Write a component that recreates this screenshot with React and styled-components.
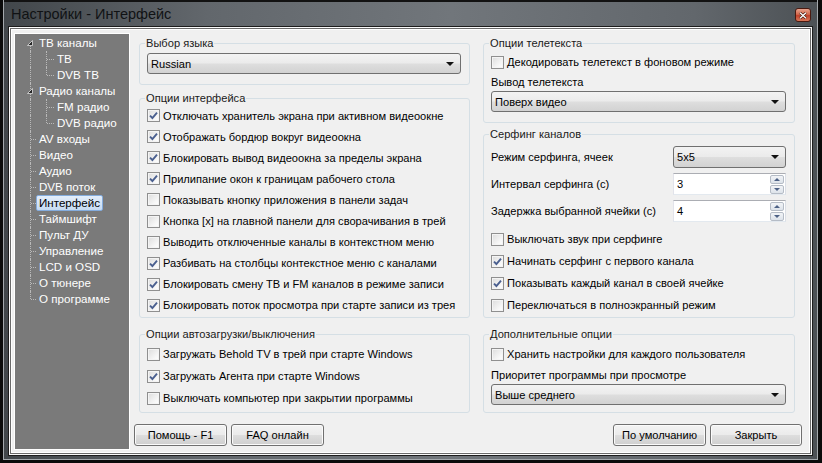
import React from 'react';
import styled, { createGlobalStyle } from 'styled-components';

const GlobalStyle = createGlobalStyle`
  html, body {
    margin: 0;
    padding: 0;
    background: #0b0b0b;
  }
  body {
    font-family: "Liberation Sans", Arial, sans-serif;
    font-size: 11.1px;
    color: #000;
  }
`;

const Window = styled.div`
  box-sizing: border-box;
  width: 815px;
  height: 460px;
  margin-left: 3px;
  display: flex;
  flex-direction: column;
  background: linear-gradient(90deg, #42474b 0%, #62676c 25%, #71767b 55%, #62676c 85%, #4c5155 100%);
  border: 1px solid #a4a9ad;
  border-top: 0;
`;

const TitleBar = styled.div`
  box-sizing: border-box;
  height: 27px;
  display: flex;
  justify-content: space-between;
  align-items: flex-start;
  padding: 0 6px 0 7px;
  border-top: 2px solid #121212;
`;

const Title = styled.div`
  font-family: "Liberation Sans", Arial, sans-serif;
  font-size: 14.5px;
  line-height: 25px;
  color: #101214;
`;

const CloseBtn = styled.div`
  box-sizing: border-box;
  width: 16px;
  height: 14px;
  margin-top: 6px;
  border: 1px solid #4a1a10;
  border-radius: 3px;
  background: linear-gradient(#e9a58f, #d2674b 45%, #c0412a 55%, #d9785a);
  display: flex;
  align-items: center;
  justify-content: center;
`;

const Client = styled.div`
  flex: 1;
  display: grid;
  grid-template-columns: 116px 1fr;
  column-gap: 4px;
  margin: 0 5px 4px 5px;
  padding: 5px 5px 4px 4px;
  border: 1px solid #fafafa;
  box-shadow: 0 0 0 1px #1c1c1c, inset 0 0 0 1px #6b6b6b, inset 0 0 0 2px #ffffff;
  background: #f0f0f0;
`;

const Tree = styled.div`
  box-sizing: border-box;
  background: #7a7a7a;
  border: 1px solid #ffffff;
  padding: 1px 0 0 7px;
  font-size: 11.6px;
`;

const TreeRow = styled.div`
  display: flex;
  align-items: center;
  height: 16px;
`;

const Guide = styled.div`
  position: relative;
  flex: none;
  width: ${p => p.$w}px;
  height: 16px;
  &::before {
    content: '';
    display: ${p => (p.$v ? 'block' : 'none')};
    position: absolute;
    left: ${p => p.$x}px;
    top: ${p => (p.$v === 'bottom' ? 11 : 0)}px;
    height: ${p => (p.$v === 'full' ? 16 : p.$v === 'top' ? 8 : 5)}px;
    border-left: 1px dotted #b9b9b9;
  }
  &::after {
    content: '';
    display: ${p => (p.$h ? 'block' : 'none')};
    position: absolute;
    left: ${p => p.$x + 1}px;
    top: 8px;
    width: ${p => p.$w - p.$x - 1}px;
    border-top: 1px dotted #b9b9b9;
  }
  svg {
    position: absolute;
    left: 5px;
    top: 5px;
  }
`;

const TreeLabel = styled.span`
  box-sizing: border-box;
  height: 16px;
  line-height: 14px;
  padding: 0 2px;
  white-space: nowrap;
  color: ${p => (p.$sel ? '#000' : '#fff')};
  border: 1px solid ${p => (p.$sel ? '#84acdd' : 'transparent')};
  border-radius: 2px;
  background: ${p => (p.$sel ? 'linear-gradient(#e4eefb, #c6dbf3)' : 'transparent')};
`;

const Main = styled.div`
  display: flex;
  flex-direction: column;
  padding: 3px 0 0 0;
`;

const Columns = styled.div`
  display: grid;
  grid-template-columns: 331px 312px;
  column-gap: 13px;
  padding-left: 5px;
`;

const Column = styled.div`
  display: flex;
  flex-direction: column;
  gap: ${p => p.$gap}px;
`;

const Group = styled.fieldset`
  box-sizing: border-box;
  height: ${p => p.$h}px;
  margin: ${p => p.$mt || 0}px 0 0 0;
  padding: ${p => p.$pt || 0}px 8px 0 7px;
  border: 1px solid #d5dfe5;
  border-radius: 3px;
  min-width: 0;
  display: flex;
  flex-direction: column;
`;

const Legend = styled.legend`
  padding: 0 1px;
  margin-left: -2px;
  line-height: 14px;
  font-size: 11.1px;
  color: #1a1a1a;
`;

const CheckRow = styled.div`
  display: flex;
  align-items: center;
  gap: 3px;
  height: ${p => p.$h || 21}px;
  flex: none;
  white-space: nowrap;
`;

const Box = styled.span`
  box-sizing: border-box;
  width: 13px;
  height: 13px;
  flex: none;
  border: 1px solid #8f8f8f;
  background: linear-gradient(135deg, #dcdcdc, #f7f7f7 70%, #ffffff);
  box-shadow: inset 0 0 0 1px #f4f4f4;
  display: flex;
  align-items: center;
  justify-content: center;
`;

const Caption = styled.div`
  height: ${p => p.$h}px;
  display: flex;
  align-items: center;
  flex: none;
`;

const Combo = styled.div`
  box-sizing: border-box;
  height: ${p => p.$h || 21}px;
  width: ${p => (p.$w ? `${p.$w}px` : 'auto')};
  flex: none;
  border: 1px solid #707070;
  border-radius: 3px;
  background: linear-gradient(#f3f3f3, #ebebeb 48%, #dedede 52%, #d2d2d2);
  display: flex;
  align-items: center;
  justify-content: space-between;
  padding: 0 6px 0 3px;
`;

const Arrow = styled.span`
  width: 0;
  height: 0;
  border-left: 4px solid transparent;
  border-right: 4px solid transparent;
  border-top: 4px solid #111;
`;

const FormRow = styled.div`
  display: flex;
  align-items: center;
  justify-content: space-between;
  height: 22px;
  flex: none;
  margin-top: ${p => p.$mt || 0}px;
`;

const Spin = styled.div`
  box-sizing: border-box;
  width: 113px;
  height: 22px;
  border: 1px solid #abadb3;
  border-bottom-color: #e3e9ef;
  border-left-color: #e2e3ea;
  border-right-color: #dbdfe6;
  background: #fff;
  display: flex;
  align-items: center;
  justify-content: space-between;
  padding: 0 1px 0 3px;
`;

const SpinButtons = styled.div`
  display: flex;
  flex-direction: column;
  gap: 1px;
`;

const SpinBtn = styled.span`
  box-sizing: border-box;
  width: 14px;
  height: 9px;
  border: 1px solid #b5bcc6;
  border-radius: 2px;
  background: linear-gradient(#f2f4f7, #dde3ea);
  display: flex;
  align-items: center;
  justify-content: center;
  &::before {
    content: '';
    width: 0;
    height: 0;
    border-left: 3px solid transparent;
    border-right: 3px solid transparent;
    ${p => (p.$up ? 'border-bottom: 3px solid #4d6185;' : 'border-top: 3px solid #4d6185;')}
  }
`;

const Spacer = styled.div`
  height: ${p => p.$h}px;
  flex: none;
`;

const Footer = styled.div`
  display: flex;
  justify-content: space-between;
  margin-top: 11px;
  padding-right: 4px;
`;

const ButtonGroup = styled.div`
  display: flex;
  gap: 4px;
`;

const Button = styled.button`
  box-sizing: border-box;
  width: ${p => p.$w || 93}px;
  height: 22px;
  padding: 0;
  font-family: "Liberation Sans", Arial, sans-serif;
  font-size: 11.1px;
  color: #000;
  border: 1px solid #707070;
  border-radius: 3px;
  background: linear-gradient(#f3f3f3, #ebebeb 48%, #dddddd 52%, #cfcfcf);
  box-shadow: inset 0 0 0 1px #fbfbfb;
`;

const Check = ({ on }) => (
  <Box>
    {on && (
      <svg width="9" height="9" viewBox="0 0 9 9">
        <path d="M1 4.6 L3.4 7 L8 1.6" fill="none" stroke="#4a5f8f" strokeWidth="1.9" />
      </svg>
    )}
  </Box>
);

const CheckItem = ({ on, h, children }) => (
  <CheckRow $h={h}>
    <Check on={on} />
    <span>{children}</span>
  </CheckRow>
);

const Expander = () => (
  <svg width="6" height="6" viewBox="0 0 6 6">
    <path d="M5.5 0.5 L5.5 5.5 L0.5 5.5 Z" fill="#262626" stroke="#e0e0e0" strokeWidth="0.8" />
  </svg>
);

const treeItems = [
  { label: 'ТВ каналы', kind: 'root' },
  { label: 'ТВ', child: 'tee' },
  { label: 'DVB ТВ', child: 'elbow' },
  { label: 'Радио каналы', kind: 'mid' },
  { label: 'FM радио', child: 'tee' },
  { label: 'DVB радио', child: 'elbow' },
  { label: 'AV входы' },
  { label: 'Видео' },
  { label: 'Аудио' },
  { label: 'DVB поток' },
  { label: 'Интерфейс', selected: true },
  { label: 'Таймшифт' },
  { label: 'Пульт ДУ' },
  { label: 'Управление' },
  { label: 'LCD и OSD' },
  { label: 'О тюнере' },
  { label: 'О программе', last: true },
];

function TreeItem({ item }) {
  if (item.child) {
    return (
      <TreeRow>
        <Guide $w={14} $x={8} $v="full" />
        <Guide $w={18} $x={10} $v={item.child === 'tee' ? 'full' : 'top'} $h />
        <TreeLabel>{item.label}</TreeLabel>
      </TreeRow>
    );
  }
  if (item.kind) {
    return (
      <TreeRow>
        <Guide $w={14} $x={8} $v={item.kind === 'mid' ? 'full' : 'bottom'}>
          <Expander />
        </Guide>
        <TreeLabel>{item.label}</TreeLabel>
      </TreeRow>
    );
  }
  return (
    <TreeRow>
      <Guide $w={14} $x={8} $v={item.last ? 'top' : 'full'} $h />
      <TreeLabel $sel={item.selected}>{item.label}</TreeLabel>
    </TreeRow>
  );
}

const interfaceOptions = [
  ['Отключать хранитель экрана при активном видеоокне', true],
  ['Отображать бордюр вокруг видеоокна', true],
  ['Блокировать вывод видеоокна за пределы экрана', true],
  ['Прилипание окон к границам рабочего стола', true],
  ['Показывать кнопку приложения в панели задач', false],
  ['Кнопка [x] на главной панели для сворачивания в трей', false],
  ['Выводить отключенные каналы в контекстном меню', false],
  ['Разбивать на столбцы контекстное меню с каналами', true],
  ['Блокировать смену ТВ и FM каналов в режиме записи', true],
  ['Блокировать поток просмотра при старте записи из трея', true],
];

const autoOptions = [
  ['Загружать Behold TV в трей при старте Windows', false],
  ['Загружать Агента при старте Windows', true],
  ['Выключать компьютер при закрытии программы', false],
];

const surfOptions = [
  ['Выключать звук при серфинге', false],
  ['Начинать серфинг с первого канала', true],
  ['Показывать каждый канал в своей ячейке', true],
  ['Переключаться в полноэкранный режим', false],
];

function SpinBox({ value }) {
  return (
    <Spin>
      <span>{value}</span>
      <SpinButtons>
        <SpinBtn $up />
        <SpinBtn />
      </SpinButtons>
    </Spin>
  );
}

export default function App() {
  return (
    <>
      <GlobalStyle />
      <Window>
        <TitleBar>
          <Title>Настройки - Интерфейс</Title>
          <CloseBtn>
            <svg width="8" height="7" viewBox="0 0 8 7">
              <path d="M1 0.8 L7 6.2 M7 0.8 L1 6.2" stroke="#3a1208" strokeWidth="2.6" />
              <path d="M1 0.8 L7 6.2 M7 0.8 L1 6.2" stroke="#ffffff" strokeWidth="1.4" />
            </svg>
          </CloseBtn>
        </TitleBar>
        <Client>
          <Tree>
            {treeItems.map(item => (
              <TreeItem key={item.label} item={item} />
            ))}
          </Tree>
          <Main>
            <Columns>
              <Column $gap={6}>
                <Group $h={49} $pt={3}>
                  <Legend>Выбор языка</Legend>
                  <Combo>
                    <span>Russian</span>
                    <Arrow />
                  </Combo>
                </Group>
                <Group $h={227} $pt={0}>
                  <Legend>Опции интерфейса</Legend>
                  {interfaceOptions.map(([text, on]) => (
                    <CheckItem key={text} on={on} h={21.1}>
                      {text}
                    </CheckItem>
                  ))}
                </Group>
                <Group $h={86} $pt={2} $mt={3}>
                  <Legend>Опции автозагрузки/выключения</Legend>
                  {autoOptions.map(([text, on]) => (
                    <CheckItem key={text} on={on} h={22}>
                      {text}
                    </CheckItem>
                  ))}
                </Group>
              </Column>
              <Column $gap={4}>
                <Group $h={87} $pt={1}>
                  <Legend>Опции телетекста</Legend>
                  <CheckItem on={false} h={22}>
                    Декодировать телетекст в фоновом режиме
                  </CheckItem>
                  <Caption $h={18}>Вывод телетекста</Caption>
                  <Combo>
                    <span>Поверх видео</span>
                    <Arrow />
                  </Combo>
                </Group>
                <Group $h={191} $pt={5}>
                  <Legend>Серфинг каналов</Legend>
                  <FormRow>
                    <span>Режим серфинга, ячеек</span>
                    <Combo $w={113} $h={22}>
                      <span>5x5</span>
                      <Arrow />
                    </Combo>
                  </FormRow>
                  <FormRow $mt={5}>
                    <span>Интервал серфинга (с)</span>
                    <SpinBox value="3" />
                  </FormRow>
                  <FormRow $mt={5}>
                    <span>Задержка выбранной ячейки (с)</span>
                    <SpinBox value="4" />
                  </FormRow>
                  <Spacer $h={6} />
                  {surfOptions.map(([text, on]) => (
                    <CheckItem key={text} on={on} h={22}>
                      {text}
                    </CheckItem>
                  ))}
                </Group>
                <Group $h={86} $pt={2} $mt={5}>
                  <Legend>Дополнительные опции</Legend>
                  <CheckItem on={false} h={22}>
                    Хранить настройки для каждого пользователя
                  </CheckItem>
                  <Caption $h={19}>Приоритет программы при просмотре</Caption>
                  <Combo>
                    <span>Выше среднего</span>
                    <Arrow />
                  </Combo>
                </Group>
              </Column>
            </Columns>
            <Footer>
              <ButtonGroup>
                <Button>Помощь - F1</Button>
                <Button>FAQ онлайн</Button>
              </ButtonGroup>
              <ButtonGroup>
                <Button>По умолчанию</Button>
                <Button $w={92}>Закрыть</Button>
              </ButtonGroup>
            </Footer>
          </Main>
        </Client>
      </Window>
    </>
  );
}
